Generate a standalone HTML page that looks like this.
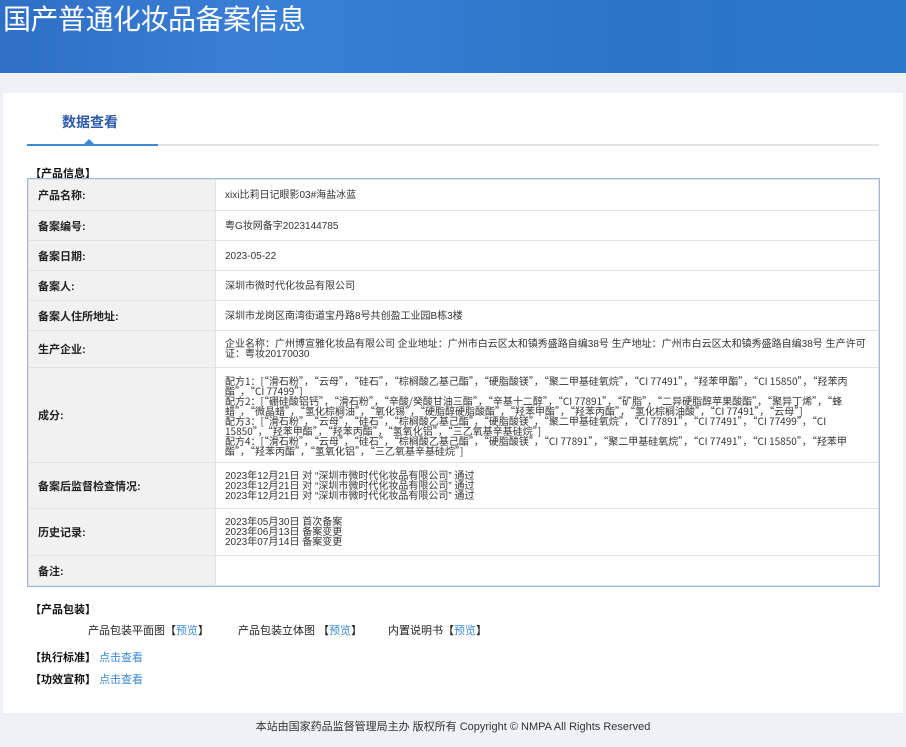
<!DOCTYPE html>
<html><head><meta charset="utf-8"><style>
*{margin:0;padding:0;box-sizing:border-box}
body{width:906px;height:747px;background:#eef2f6;font-family:"Liberation Sans","Noto Sans CJK SC",sans-serif;position:relative;overflow:hidden;color:#333}
.hdr{position:absolute;left:0;top:0;width:906px;height:73px;background:linear-gradient(90deg,#2f6fc6 0%,#3a7fd6 30%,#2c74c8 70%,#2a78cc 100%)}
.hdr h1{position:absolute;left:3px;top:-2px;font-size:28px;font-weight:normal;color:#fff;font-family:"Noto Sans CJK SC",sans-serif;letter-spacing:-0.5px}
.panel{position:absolute;left:3px;top:93px;width:900px;height:620px;background:#fff}
.tab{position:absolute;left:62px;top:112px;font-size:14px;color:#2b5aa8;font-weight:bold}
.tl{position:absolute;left:27px;top:144px;width:852px;height:2px;background:#e3e3e3}
.tb{position:absolute;left:27px;top:144px;width:131px;height:2px;background:#3a8ad6}
.tri{position:absolute;left:84px;top:139px;width:0;height:0;border-left:5px solid transparent;border-right:5px solid transparent;border-bottom:5px solid #3a8ad6}
.sec{position:absolute;font-size:11px;font-weight:bold;color:#111}
table{position:absolute;left:28px;top:179px;width:851px;border-collapse:collapse;font-size:10px;outline:1px solid #9ab8e6}
td{border:1px solid #e2e2e2;vertical-align:middle}
td.l{width:187px;background:#f1f1f1;font-weight:bold;font-size:11px;padding-left:9px;color:#222}
td.v{padding:2px 8px 0 9px;line-height:10px;color:#333}
.q{font-family:"Noto Sans CJK SC",sans-serif}
a{color:#3a8ad6;text-decoration:none}
.pk{position:absolute;top:622px;font-size:11px;color:#222}
.foot{position:absolute;top:718px;left:0;width:906px;text-align:center;font-size:11px;color:#333}
</style></head><body>
<div class="hdr"><h1>国产普通化妆品备案信息</h1></div>
<div class="panel"></div>
<div class="tab">数据查看</div>
<div class="tl"></div><div class="tb"></div><div class="tri"></div>
<div class="sec" style="left:30px;top:165px">【产品信息】</div>
<table>
<tr style="height:31px"><td class="l">产品名称:</td><td class="v">xixi比莉日记眼影03#海盐冰蓝</td></tr>
<tr style="height:30px"><td class="l">备案编号:</td><td class="v">粤G妆网备字2023144785</td></tr>
<tr style="height:30px"><td class="l">备案日期:</td><td class="v">2023-05-22</td></tr>
<tr style="height:30px"><td class="l">备案人:</td><td class="v">深圳市微时代化妆品有限公司</td></tr>
<tr style="height:30px"><td class="l">备案人住所地址:</td><td class="v">深圳市龙岗区南湾街道宝丹路8号共创盈工业园B栋3楼</td></tr>
<tr style="height:37px"><td class="l">生产企业:</td><td class="v">企业名称：广州博宣雅化妆品有限公司 企业地址：广州市白云区太和镇秀盛路自编38号 生产地址：广州市白云区太和镇秀盛路自编38号 生产许可证：粤妆20170030</td></tr>
<tr style="height:95px"><td class="l">成分:</td><td class="v q">配方1：[“滑石粉”，“云母”，“硅石”，“棕榈酸乙基己酯”，“硬脂酸镁”，“聚二甲基硅氧烷”，“CI 77491”，“羟苯甲酯”，“CI 15850”，“羟苯丙酯”，“CI 77499”]<br>配方2：[“硼硅酸铝钙”，“滑石粉”，“辛酸/癸酸甘油三酯”，“辛基十二醇”，“CI 77891”，“矿脂”，“二异硬脂醇苹果酸酯”，“聚异丁烯”，“蜂蜡”，“微晶蜡”，“氢化棕榈油”，“氧化锡”，“硬脂醇硬脂酸酯”，“羟苯甲酯”，“羟苯丙酯”，“氢化棕榈油酸”，“CI 77491”，“云母”]<br>配方3：[“滑石粉”，“云母”，“硅石”，“棕榈酸乙基己酯”，“硬脂酸镁”，“聚二甲基硅氧烷”，“CI 77891”，“CI 77491”，“CI 77499”，“CI 15850”，“羟苯甲酯”，“羟苯丙酯”，“氢氧化铝”，“三乙氧基辛基硅烷”]<br>配方4：[“滑石粉”，“云母”，“硅石”，“棕榈酸乙基己酯”，“硬脂酸镁”，“CI 77891”，“聚二甲基硅氧烷”，“CI 77491”，“CI 15850”，“羟苯甲酯”，“羟苯丙酯”，“氢氧化铝”，“三乙氧基辛基硅烷”]</td></tr>
<tr style="height:46px"><td class="l">备案后监督检查情况:</td><td class="v">2023年12月21日 对 “深圳市微时代化妆品有限公司” 通过<br>2023年12月21日 对 “深圳市微时代化妆品有限公司” 通过<br>2023年12月21日 对 “深圳市微时代化妆品有限公司” 通过</td></tr>
<tr style="height:47px"><td class="l">历史记录:</td><td class="v">2023年05月30日 首次备案<br>2023年06月13日 备案变更<br>2023年07月14日 备案变更</td></tr>
<tr style="height:30px"><td class="l">备注:</td><td class="v"></td></tr>
</table>
<div class="sec" style="left:30px;top:601px">【产品包装】</div>
<div class="pk" style="left:88px">产品包装平面图【<a>预览</a>】</div>
<div class="pk" style="left:238px">产品包装立体图 【<a>预览</a>】</div>
<div class="pk" style="left:388px">内置说明书【<a>预览</a>】</div>
<div class="sec" style="left:30px;top:649px">【执行标准】 <a style="font-weight:normal">点击查看</a></div>
<div class="sec" style="left:30px;top:671px">【功效宣称】 <a style="font-weight:normal">点击查看</a></div>
<div class="foot">本站由国家药品监督管理局主办 版权所有 Copyright © NMPA All Rights Reserved</div>
</body></html>
